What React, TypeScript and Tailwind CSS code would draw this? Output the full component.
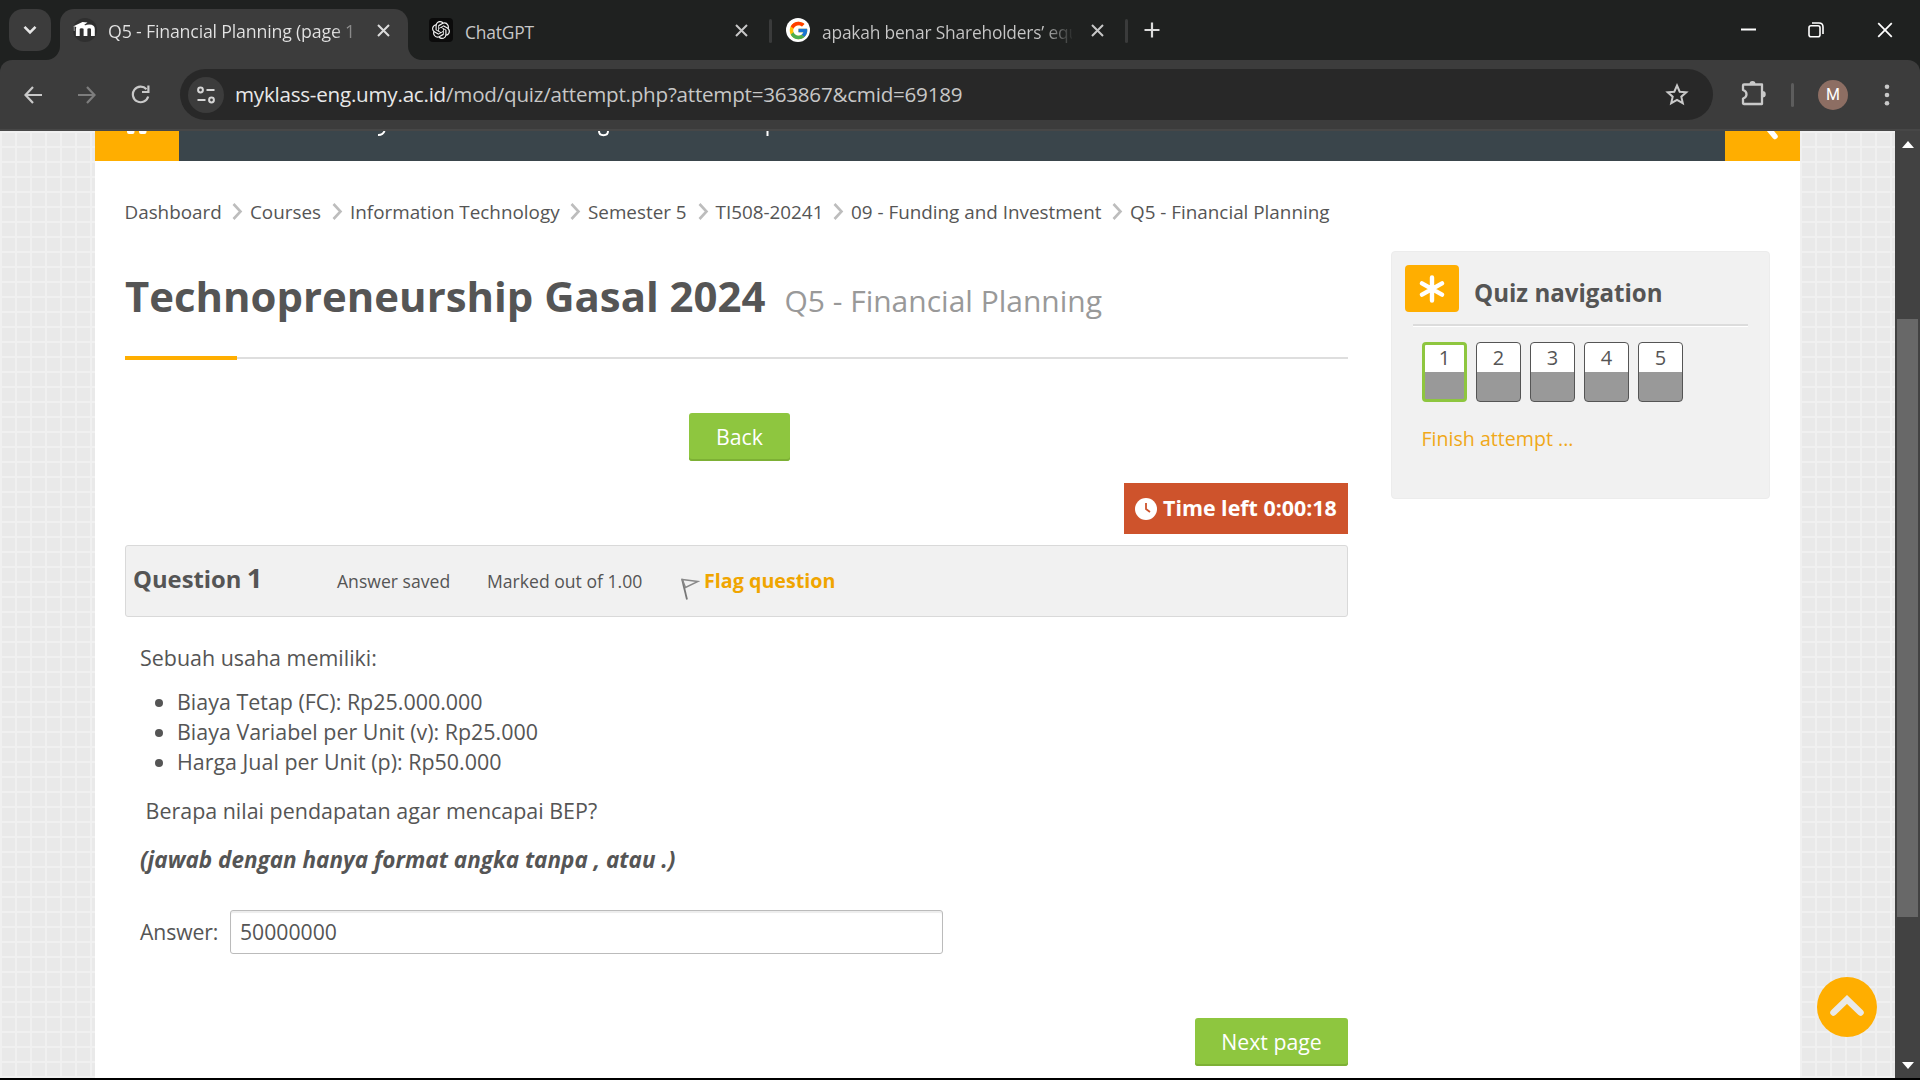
import type { ReactNode } from 'react';
import { SiOpenai } from 'react-icons/si';
import { FcGoogle } from 'react-icons/fc';

function Cross({ size = 13, className = 'text-[#dcdcdc]', w = 2 }: { size?: number; className?: string; w?: number }) {
  return (
    <svg width={size} height={size} viewBox="0 0 13 13" className={className}>
      <path d="M1 1 L12 12 M12 1 L1 12" stroke="currentColor" strokeWidth={w} fill="none" />
    </svg>
  );
}

function TabStrip() {
  return (
    <div className="flex h-[60px] bg-[#1f2120] pl-[9px] text-[17.4px] leading-[24px] tracking-[-0.2px] text-[#c7c7c7]">
      <div className="mt-[9px] flex h-[42px] w-[42px] items-center justify-center rounded-[14px] bg-[#3c3c3c]">
        <svg width="14" height="10" viewBox="0 0 14 10">
          <path d="M1.5 1.8 L7 7.3 L12.5 1.8" stroke="#e6e6e6" strokeWidth="2.6" fill="none" />
        </svg>
      </div>

      {/* active tab with flared bottom corners */}
      <div className="relative ml-[9px] mt-[9px] flex h-[51px] w-[348px] items-center rounded-t-[14px] bg-[#3c3c3c] pb-[9px] pl-[13px] text-[#e3e3e3]">
        <svg className="absolute -left-[14px] bottom-0" width="14" height="14" viewBox="0 0 14 14">
          <path d="M14 0 V14 H0 A14 14 0 0 0 14 0Z" fill="#3c3c3c" />
        </svg>
        <svg className="absolute -right-[14px] bottom-0" width="14" height="14" viewBox="0 0 14 14">
          <path d="M0 0 V14 H14 A14 14 0 0 1 0 0Z" fill="#3c3c3c" />
        </svg>
        <svg width="24" height="24" viewBox="0 0 24 24">
          <circle cx="12" cy="12" r="12" fill="#2f2f2f" />
          <path d="M4.8 18 V10.5 M12.5 18 V11 Q12.5 8.3 8.6 8.3 Q4.8 8.3 4.8 11 M12.5 11 Q12.5 8.3 16.2 8.3 Q19.9 8.3 19.9 11 V18" stroke="#fff" strokeWidth="3.8" fill="none" />
          <path d="M0.5 8.2 L9.5 4 L14.5 4.5 L7 10Z" fill="#fff" />
          <path d="M1.2 8 V13" stroke="#bbb" strokeWidth="0.8" />
        </svg>
        <span className="ml-[11px] w-[250px] overflow-hidden bg-[linear-gradient(90deg,#e3e3e3_90%,#4a4a4a_102%)] bg-clip-text pt-[2px] text-[17.8px] whitespace-nowrap text-transparent">
          Q5 - Financial Planning (page 1
        </span>
        <span className="ml-[19px] flex"><Cross /></span>
      </div>

      <div className="flex w-[361px] items-center pl-[21px]">
        <span className="flex h-[24px] w-[24px] items-center justify-center rounded-[4px] bg-[#0b0b0b]">
          <SiOpenai size={18} color="#f2f2f2" />
        </span>
        <span className="ml-[12px] flex-1 pt-[3px]">ChatGPT</span>
        <Cross className="mr-[21px] text-[#c7c7c7]" />
      </div>
      <div className="mt-[19px] h-[24px] w-[3px] rounded-full bg-[#3a3b3b]" />
      <div className="flex w-[353px] items-center pl-[14px]">
        <span className="flex h-[24px] w-[24px] items-center justify-center rounded-full bg-white">
          <FcGoogle size={21} />
        </span>
        <span className="ml-[12px] w-[250px] overflow-hidden bg-[linear-gradient(90deg,#c7c7c7_88%,#1f2120_101%)] bg-clip-text pt-[3px] whitespace-nowrap text-transparent">
          apakah benar Shareholders’ equity
        </span>
        <span className="ml-[19px] flex"><Cross className="text-[#c7c7c7]" /></span>
      </div>
      <div className="mt-[19px] h-[24px] w-[3px] rounded-full bg-[#3a3b3b]" />
      <svg width="16" height="16" viewBox="0 0 16 16" className="mt-[22px] ml-[16px]">
        <path d="M8 0.5 V15.5 M0.5 8 H15.5" stroke="#dcdcdc" strokeWidth="2.2" />
      </svg>

      <div className="mr-[27px] ml-auto flex h-[60px] items-center text-white">
        <svg width="15" height="15" viewBox="0 0 15 15"><path d="M0 6.5 H15" stroke="#fff" strokeWidth="2" /></svg>
        <svg width="16" height="16" viewBox="0 0 16 16" className="ml-[52px]">
          <rect x="1" y="3.8" width="11" height="11" rx="2" stroke="#fff" strokeWidth="1.6" fill="none" />
          <path d="M4 1 H11 Q15 1 15 5 V12" stroke="#fff" strokeWidth="1.6" fill="none" />
        </svg>
        <span className="ml-[53px] flex"><Cross size={16} className="text-white" w={1.4} /></span>
      </div>
    </div>
  );
}

function Toolbar() {
  return (
    <div className="h-[71px] bg-[#1f2120]">
      <div className="flex h-[71px] items-center rounded-t-[12px] border-b-2 border-[#474747] bg-[#3c3c3c] pl-[24px]">
        <svg width="18" height="18" viewBox="0 0 18 18">
          <path d="M18 9 H1.5 M9 1 L1.5 9 L9 17" stroke="#c9c9c9" strokeWidth="2.2" fill="none" />
        </svg>
        <svg width="18" height="18" viewBox="0 0 18 18" className="ml-[36px]">
          <path d="M0 9 H16.5 M9 1 L16.5 9 L9 17" stroke="#7d7d7d" strokeWidth="2.2" fill="none" />
        </svg>
        <svg width="19" height="19" viewBox="0 0 19 19" className="ml-[35px]">
          <path d="M17.2 11.5 A7.8 7.8 0 1 1 15.5 4.2" stroke="#c9c9c9" strokeWidth="2.2" fill="none" />
          <path d="M17.4 0.5 V7 H11" stroke="#c9c9c9" strokeWidth="2.2" fill="none" />
        </svg>
        <div className="ml-[30px] flex h-[51px] w-[1533px] items-center rounded-full bg-[#282828] pr-[24px] pl-[8px]">
          <span className="flex h-[36px] w-[36px] items-center justify-center rounded-full bg-[#3c3c3c]">
            <svg width="18" height="18" viewBox="0 0 18 18" stroke="#d6d6d6" strokeWidth="2" fill="none">
              <circle cx="3.5" cy="4" r="2.4" />
              <path d="M9.5 4 H17.5 M0.5 14 H8.5" />
              <circle cx="14.5" cy="14" r="2.4" />
            </svg>
          </span>
          <span className="ml-[11px] flex-1 pb-[2px] text-[20.6px] leading-[28px] tracking-[-0.23px] whitespace-nowrap text-[#c7c7c7]">
            <span className="text-[#e8e8e8]">myklass-eng.umy.ac.id</span>/mod/quiz/attempt.php?attempt=363867&amp;cmid=69189
          </span>
          <svg width="24" height="23" viewBox="0 0 24 23">
            <path d="M12 2.5 L14.7 8.7 L21.3 9.3 L16.3 13.7 L17.8 20.2 L12 16.8 L6.2 20.2 L7.7 13.7 L2.7 9.3 L9.3 8.7Z" stroke="#c9c9c9" strokeWidth="2" fill="none" />
          </svg>
        </div>
        <svg width="26" height="25" viewBox="0 0 26 25" className="mb-[2px] ml-[28px]">
          <path d="M3 3.5 H21 V23 H3 Q2 23 2 22 V17.5 Q5.5 16.5 5.5 13.3 Q5.5 10 2 9 V4.5 Q2 3.5 3 3.5Z" stroke="#c9c9c9" strokeWidth="2.3" fill="none" strokeLinejoin="round" />
          <path d="M8.5 3 A3 3 0 0 1 14.5 3Z M21.5 10 A3.2 3.2 0 0 1 21.5 16.5Z" fill="#c9c9c9" />
        </svg>
        <div className="ml-[24px] h-[24px] w-[3px] rounded-full bg-[#5d5d5d]" />
        <div className="ml-[24px] flex h-[30px] w-[30px] items-center justify-center rounded-full bg-[#8d6e63] pt-[1px] font-[Roboto] text-[16px] text-white">M</div>
        <svg width="6" height="22" viewBox="0 0 6 22" className="ml-[36px]" fill="#c9c9c9">
          <circle cx="3" cy="2.7" r="2.3" /><circle cx="3" cy="11" r="2.3" /><circle cx="3" cy="19.3" r="2.3" />
        </svg>
      </div>
    </div>
  );
}

/* Bottom edge of the site's navigation bar, scrolled mostly out of view */
function SiteNav() {
  return (
    <div className="flex h-[30px] justify-between bg-[#3a454b]">
      <div className="w-[84px] bg-[#ffae00]">
        <svg width="84" height="30" viewBox="0 0 84 30" fill="#fff">
          <path d="M32 0 H39.5 V1 Q39.5 3 37.5 3 H34 Q32 3 32 1Z M44 0 H51.5 V1 Q51.5 3 49.5 3 H46 Q44 3 44 1Z" />
        </svg>
      </div>
      <svg width="1546" height="30" viewBox="0 0 1546 30" fill="none" stroke="#fff" strokeWidth="2">
        <path d="M205.5 0 Q204 4.2 199 4" />
        <path d="M420 0 Q420 4.2 424.5 4.2 Q429 4.2 429 0" />
        <path d="M588.5 0 V5" />
      </svg>
      <div className="w-[75px] bg-[#ffae00]">
        <svg width="75" height="30" viewBox="0 0 75 30">
          <path d="M43 -3 L50 5.5" stroke="#fff" strokeWidth="5.5" strokeLinecap="round" />
        </svg>
      </div>
    </div>
  );
}

const crumbs: { text: string; w: string }[] = [
  { text: 'Dashboard', w: 'w-[125.5px]' },
  { text: 'Courses', w: 'w-[100px]' },
  { text: 'Information Technology', w: 'w-[238px]' },
  { text: 'Semester 5', w: 'w-[127.5px]' },
  { text: 'TI508-20241', w: 'w-[135.5px]' },
  { text: '09 - Funding and Investment', w: 'w-[279px]' },
  { text: 'Q5 - Financial Planning', w: 'w-[220px]' },
];

function Breadcrumb() {
  return (
    <div className="flex text-[18.85px] leading-[30px] whitespace-nowrap">
      {crumbs.map((c, i) => (
        <div key={c.text} className={`flex shrink-0 justify-between ${c.w}`}>
          <span>{c.text}</span>
          {i < crumbs.length - 1 && (
            <svg width="11" height="17" viewBox="0 0 11 17" className="mt-[6px] mr-[7px]">
              <path d="M1.5 1 L8.5 8.5 L1.5 16" stroke="#bdbdbd" strokeWidth="2.6" fill="none" />
            </svg>
          )}
        </div>
      ))}
    </div>
  );
}

function Button({ children, className }: { children: ReactNode; className: string }) {
  return (
    <button className={`block h-[48px] rounded-[3px] bg-[#8ec63f] pb-[1px] text-[21.25px] leading-[46px] text-white shadow-[inset_0_-2px_0_#7db035] ${className}`}>
      {children}
    </button>
  );
}

function Question() {
  return (
    <>
      <div className="mt-[11px] flex h-[72px] items-baseline rounded-[3px] border border-[#d9d9d9] bg-[#f1f1f1] pt-[12px] pl-[7px] text-[17.6px] leading-[40px] whitespace-nowrap">
        <h3 className="w-[204px] text-[23.8px] font-bold">
          Question <span className="-ml-px text-[27.5px]">1</span>
        </h3>
        <div className="w-[150px]">Answer saved</div>
        <div className="w-[193px]">Marked out of 1.00</div>
        <svg width="20" height="22" viewBox="0 0 20 22" className="mt-[20px] self-start" fill="none">
          <path d="M2 1 L7 21.5" stroke="#777" strokeWidth="1.8" />
          <path d="M2.3 1.5 L18 3.5 L5.5 9.5Z" stroke="#888" strokeWidth="1.5" />
        </svg>
        <span className="ml-[4px] text-[19.7px] font-bold text-[#f0a500]">Flag question</span>
      </div>
      <div className="pt-[26px] pl-[15px] text-[21.45px] leading-[30px]">
        <p>Sebuah usaha memiliki:</p>
        <ul className="mt-[14px] list-disc pl-[37px]">
          <li>Biaya Tetap (FC): Rp25.000.000</li>
          <li>Biaya Variabel per Unit (v): Rp25.000</li>
          <li>Harga Jual per Unit (p): Rp50.000</li>
        </ul>
        <p className="mt-[19px]">&nbsp;Berapa nilai pendapatan agar mencapai BEP?</p>
        <p className="mt-[19px] text-[22.5px] font-bold italic">(jawab dengan hanya format angka tanpa , atau .)</p>
        <div className="mt-[35px] flex items-center text-[21.2px]">
          <label className="w-[90px] tracking-[-0.1px]">Answer:</label>
          <div className="flex h-[44px] w-[713px] items-center rounded-[3px] border border-[#bbb] bg-white pl-[9px] shadow-[inset_0_2px_1px_#ededed]">
            50000000
          </div>
        </div>
      </div>
    </>
  );
}

function QuizNavigation() {
  return (
    <aside className="mt-[90px] h-[248px] w-[379px] rounded-[4px] border border-[#ececec] bg-[#f1f1f1] pt-[13px]">
      <div className="flex h-[47px] pl-[13px]">
        <div className="flex h-[47px] w-[54px] items-center justify-center rounded-[4px] bg-[#ffae00]">
          <svg width="26" height="28" viewBox="0 0 26 28">
            <path d="M13 2.5 V25.5 M3 8.3 L23 19.7 M23 8.3 L3 19.7" stroke="#fff" strokeWidth="4.4" strokeLinecap="round" />
          </svg>
        </div>
        <h2 className="mt-[12px] ml-[15px] text-[24.1px] leading-[32px] font-bold">Quiz navigation</h2>
      </div>
      <div className="mt-[12px] ml-[21px] h-[3px] w-[335px] border-t-2 border-[#dcdcdc] bg-white" />
      <div className="mt-[15px] flex gap-[9px] pl-[30px] text-center text-[20px]">
        {[1, 2, 3, 4, 5].map((n) => (
          <a
            key={n}
            className={
              n === 1
                ? 'h-[60px] w-[45px] overflow-hidden rounded-[4px] border-3 border-[#8ec63f] bg-[linear-gradient(#fff_27px,#999_27px)] leading-[26px]'
                : 'h-[60px] w-[45px] overflow-hidden rounded-[4px] border border-[#555] bg-[linear-gradient(#fff_29px,#999_29px)] leading-[30px]'
            }
          >
            {n}
          </a>
        ))}
      </div>
      <a className="mt-[22px] block pl-[29.5px] text-[19.6px] leading-[30px] text-[#f0a818]">Finish attempt ...</a>
    </aside>
  );
}

export default function App() {
  return (
    <div className="flex h-[1080px] w-[1920px] flex-col overflow-hidden bg-black font-['Open_Sans',sans-serif]">
      <TabStrip />
      <Toolbar />
      <div className="relative flex h-[947px] bg-[#e9e9e9] bg-[linear-gradient(90deg,#f0f0f0_2px,transparent_2px),linear-gradient(#f0f0f0_2px,transparent_2px)] bg-size-[15px_15px] pl-[95px] text-[#555]">
        <div className="h-[947px] w-[1705px] bg-white">
          <SiteNav />
          <div className="flex pl-[30px]">
            <main className="w-[1223px] pt-[36px]">
              <div className="-ml-[0.5px]"><Breadcrumb /></div>
              <h1 className="mt-[44px] flex h-[50px] items-baseline text-[41.9px] leading-[50px] font-bold whitespace-nowrap">
                Technopreneurship Gasal 2024
                <small className="ml-[19px] text-[30px] font-normal text-[#999]">Q5 - Financial Planning</small>
              </h1>
              <div className="mt-[35px] flex h-[4px] items-center">
                <div className="h-[4px] w-[112px] bg-[#ffae00]" />
                <div className="h-[2px] flex-1 bg-[#dedede]" />
              </div>
              <Button className="mt-[53px] ml-[564px] w-[101px]">Back</Button>
              <div className="mt-[22px] ml-auto flex h-[51px] w-[224px] items-center bg-[#ce532c] pl-[11px] text-[21.4px] font-bold whitespace-nowrap text-white">
                <svg width="22" height="22" viewBox="0 0 22 22">
                  <circle cx="11" cy="11" r="11" fill="#fff" />
                  <path d="M11 5 V11 L15 14" stroke="#ce532c" strokeWidth="1.8" fill="none" />
                </svg>
                <span className="ml-[6px]">Time left 0:00:18</span>
              </div>
              <Question />
              <Button className="mt-[64px] ml-auto w-[153px]">Next page</Button>
            </main>
            <div className="ml-[43px]"><QuizNavigation /></div>
          </div>
        </div>

        <button className="absolute top-[846px] left-[1817px] flex h-[60px] w-[60px] items-center justify-center rounded-full bg-[#ffae00]">
          <svg width="34" height="22" viewBox="0 0 34 22" className="mb-[2px]">
            <path d="M3.5 17.5 L17 4.5 L30.5 17.5" stroke="#e9e9e9" strokeWidth="6.5" strokeLinecap="round" fill="none" />
          </svg>
        </button>

        <div className="ml-auto flex w-[25px] flex-col items-center bg-[#424242] pt-[10px] pb-[9px]">
          <svg width="12" height="7" viewBox="0 0 12 7"><path d="M6 0 L12 7 H0Z" fill="#fff" /></svg>
          <div className="mt-[171px] h-[598px] w-[21px] bg-[#686868]" />
          <svg width="12" height="7" viewBox="0 0 12 7" className="mt-auto"><path d="M6 7 L12 0 H0Z" fill="#fff" /></svg>
        </div>
      </div>
    </div>
  );
}
